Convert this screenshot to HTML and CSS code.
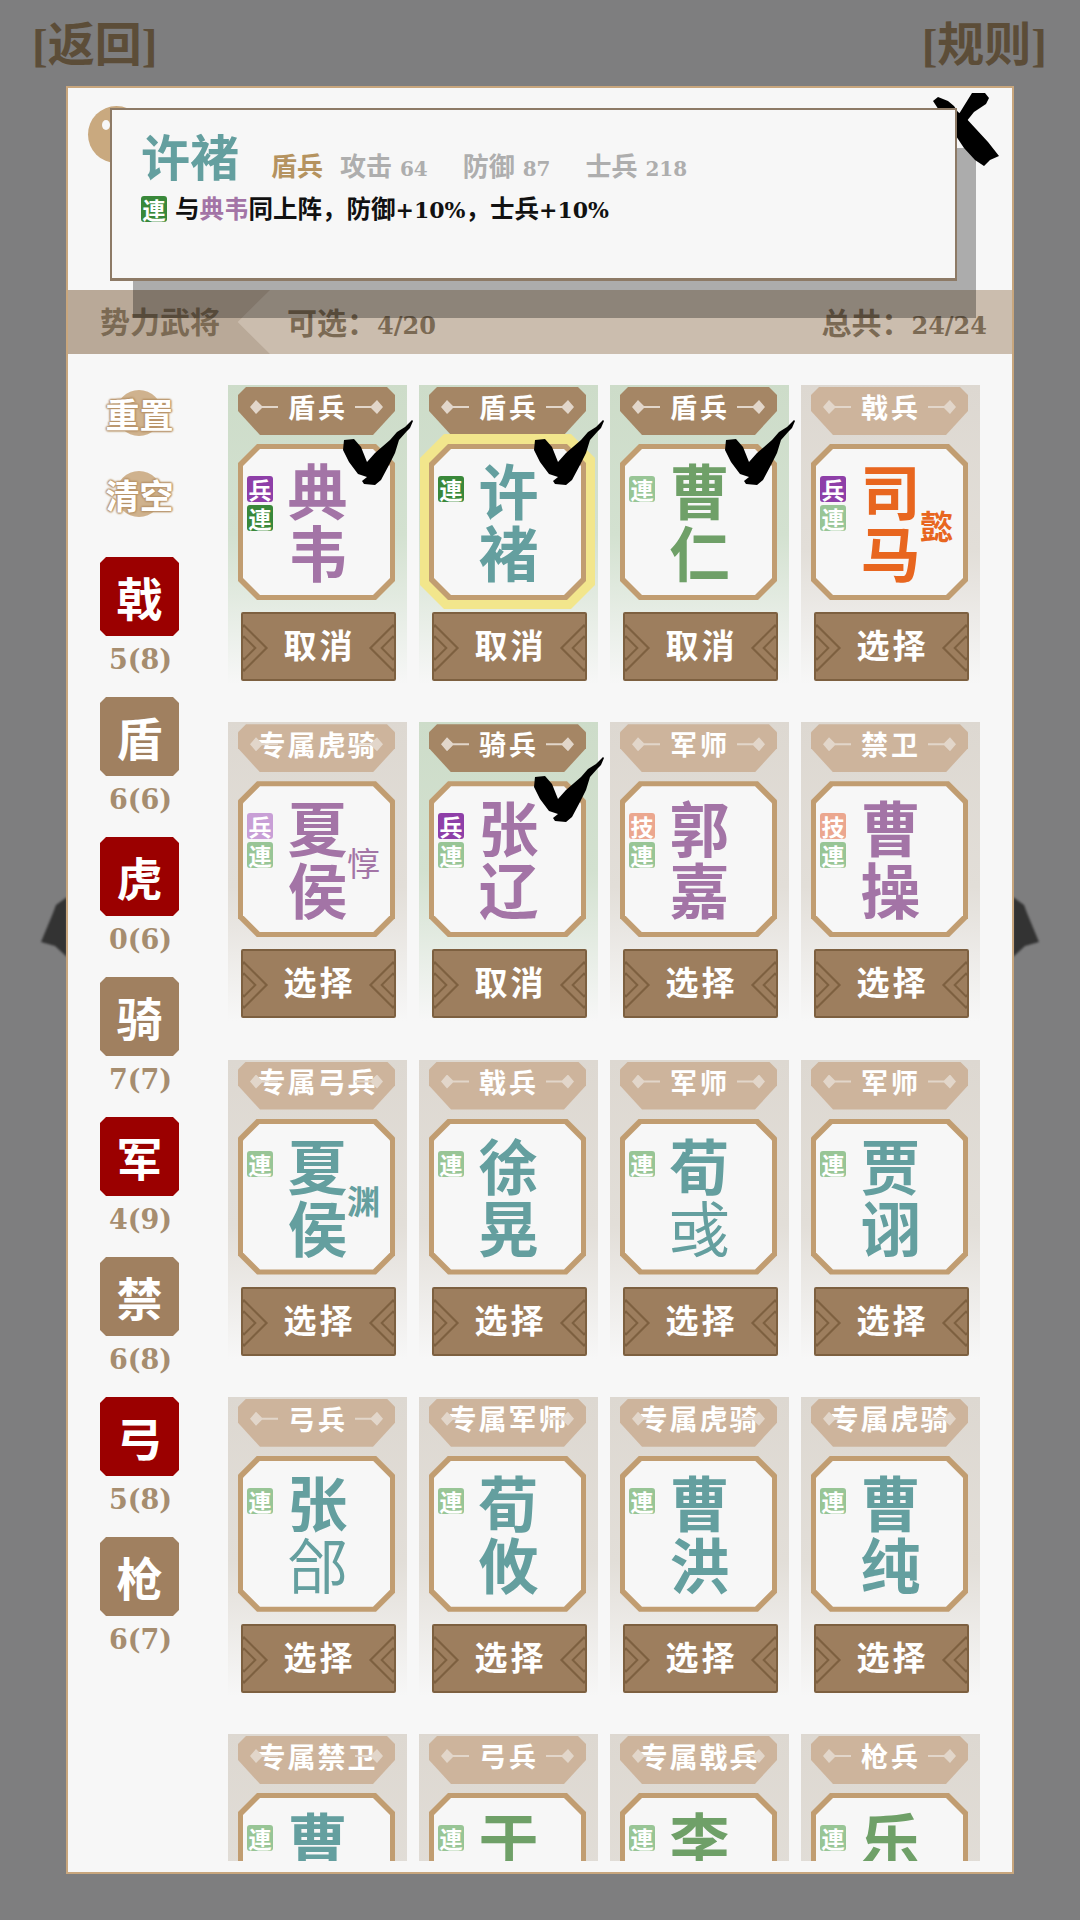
FILE: index.html
```html
<!DOCTYPE html>
<html lang="zh-CN">
<head>
    <meta charset="UTF-8">
    <title>势力武将</title>
    <link rel="stylesheet" href="styles.css">
</head>
<body>
    <svg class="brush-side brush-left" viewBox="0 0 26 60"><path d="M26 0 L15 8 L12 16 L0 45 L14 49 L26 60 Z"/></svg>
    <svg class="brush-side brush-right" viewBox="0 0 26 60"><path d="M26 0 L15 8 L12 16 L0 45 L14 49 L26 60 Z"/></svg>

    <header class="top-nav">
        <a class="nav-link"><i>[</i>返回<i>]</i></a>
        <a class="nav-link"><i>[</i>规则<i>]</i></a>
    </header>

    <div class="panel">
        <!-- Panel head, mostly under the tooltip -->
        <div class="panel-head">
            <span class="head-icon"></span>
            <span class="head-title">魏武帝</span>
        </div>

        <div class="bar">
            <div class="bar-title">势力武将</div>
            <div class="bar-pick">可选：<span class="num">4/20</span></div>
            <div class="bar-total">总共：<span class="num">24/24</span></div>
        </div>

        <div class="main">
            <aside class="side">
                <div class="reset">重置</div>
                <div class="reset reset-last">清空</div>
                <div class="side-item"><div class="side-tab red">戟</div><div class="side-count">5(8)</div></div>
                <div class="side-item"><div class="side-tab">盾</div><div class="side-count">6(6)</div></div>
                <div class="side-item"><div class="side-tab red">虎</div><div class="side-count">0(6)</div></div>
                <div class="side-item"><div class="side-tab">骑</div><div class="side-count">7(7)</div></div>
                <div class="side-item"><div class="side-tab red">军</div><div class="side-count">4(9)</div></div>
                <div class="side-item"><div class="side-tab">禁</div><div class="side-count">6(8)</div></div>
                <div class="side-item"><div class="side-tab red">弓</div><div class="side-count">5(8)</div></div>
                <div class="side-item"><div class="side-tab">枪</div><div class="side-count">6(7)</div></div>
            </aside>

            <section class="grid">
                <!-- Row 1 -->
                <div class="card picked">
                    <div class="tag">盾兵</div>
                    <div class="portrait"><div class="frame"><div class="frame-in">
                        <div class="badges"><span class="badge bing">兵</span><span class="badge lian">連</span></div>
                        <div class="name purple">典韦</div>
                    </div></div></div>
                    <div class="btn">取消</div>
                    <svg class="check"><use href="#check"/></svg>
                </div>
                <div class="card picked glow">
                    <div class="tag">盾兵</div>
                    <div class="portrait"><div class="frame"><div class="frame-in">
                        <div class="badges"><span class="badge lian">連</span></div>
                        <div class="name teal">许褚</div>
                    </div></div></div>
                    <div class="btn">取消</div>
                    <svg class="check"><use href="#check"/></svg>
                </div>
                <div class="card picked">
                    <div class="tag">盾兵</div>
                    <div class="portrait"><div class="frame"><div class="frame-in">
                        <div class="badges"><span class="badge lian off">連</span></div>
                        <div class="name green">曹仁</div>
                    </div></div></div>
                    <div class="btn">取消</div>
                    <svg class="check"><use href="#check"/></svg>
                </div>
                <div class="card">
                    <div class="tag">戟兵</div>
                    <div class="portrait"><div class="frame"><div class="frame-in">
                        <div class="badges"><span class="badge bing">兵</span><span class="badge lian off">連</span></div>
                        <div class="name orange">司马<span class="given">懿</span></div>
                    </div></div></div>
                    <div class="btn">选择</div>
                </div>

                <!-- Row 2 -->
                <div class="card">
                    <div class="tag long">专属虎骑</div>
                    <div class="portrait"><div class="frame"><div class="frame-in">
                        <div class="badges"><span class="badge bing off">兵</span><span class="badge lian off">連</span></div>
                        <div class="name purple">夏侯<span class="given thin">惇</span></div>
                    </div></div></div>
                    <div class="btn">选择</div>
                </div>
                <div class="card picked">
                    <div class="tag">骑兵</div>
                    <div class="portrait"><div class="frame"><div class="frame-in">
                        <div class="badges"><span class="badge bing">兵</span><span class="badge lian off">連</span></div>
                        <div class="name purple">张辽</div>
                    </div></div></div>
                    <div class="btn">取消</div>
                    <svg class="check"><use href="#check"/></svg>
                </div>
                <div class="card">
                    <div class="tag">军师</div>
                    <div class="portrait"><div class="frame"><div class="frame-in">
                        <div class="badges"><span class="badge ji">技</span><span class="badge lian off">連</span></div>
                        <div class="name purple">郭嘉</div>
                    </div></div></div>
                    <div class="btn">选择</div>
                </div>
                <div class="card">
                    <div class="tag">禁卫</div>
                    <div class="portrait"><div class="frame"><div class="frame-in">
                        <div class="badges"><span class="badge ji">技</span><span class="badge lian off">連</span></div>
                        <div class="name purple">曹操</div>
                    </div></div></div>
                    <div class="btn">选择</div>
                </div>

                <!-- Row 3 -->
                <div class="card">
                    <div class="tag long">专属弓兵</div>
                    <div class="portrait"><div class="frame"><div class="frame-in">
                        <div class="badges"><span class="badge lian off">連</span></div>
                        <div class="name teal">夏侯<span class="given">渊</span></div>
                    </div></div></div>
                    <div class="btn">选择</div>
                </div>
                <div class="card">
                    <div class="tag">戟兵</div>
                    <div class="portrait"><div class="frame"><div class="frame-in">
                        <div class="badges"><span class="badge lian off">連</span></div>
                        <div class="name teal">徐晃</div>
                    </div></div></div>
                    <div class="btn">选择</div>
                </div>
                <div class="card">
                    <div class="tag">军师</div>
                    <div class="portrait"><div class="frame"><div class="frame-in">
                        <div class="badges"><span class="badge lian off">連</span></div>
                        <div class="name teal">荀<span class="light">彧</span></div>
                    </div></div></div>
                    <div class="btn">选择</div>
                </div>
                <div class="card">
                    <div class="tag">军师</div>
                    <div class="portrait"><div class="frame"><div class="frame-in">
                        <div class="badges"><span class="badge lian off">連</span></div>
                        <div class="name teal">贾诩</div>
                    </div></div></div>
                    <div class="btn">选择</div>
                </div>

                <!-- Row 4 -->
                <div class="card">
                    <div class="tag">弓兵</div>
                    <div class="portrait"><div class="frame"><div class="frame-in">
                        <div class="badges"><span class="badge lian off">連</span></div>
                        <div class="name teal">张<span class="light">郃</span></div>
                    </div></div></div>
                    <div class="btn">选择</div>
                </div>
                <div class="card">
                    <div class="tag long">专属军师</div>
                    <div class="portrait"><div class="frame"><div class="frame-in">
                        <div class="badges"><span class="badge lian off">連</span></div>
                        <div class="name teal">荀攸</div>
                    </div></div></div>
                    <div class="btn">选择</div>
                </div>
                <div class="card">
                    <div class="tag long">专属虎骑</div>
                    <div class="portrait"><div class="frame"><div class="frame-in">
                        <div class="badges"><span class="badge lian off">連</span></div>
                        <div class="name teal">曹洪</div>
                    </div></div></div>
                    <div class="btn">选择</div>
                </div>
                <div class="card">
                    <div class="tag long">专属虎骑</div>
                    <div class="portrait"><div class="frame"><div class="frame-in">
                        <div class="badges"><span class="badge lian off">連</span></div>
                        <div class="name teal">曹纯</div>
                    </div></div></div>
                    <div class="btn">选择</div>
                </div>

                <!-- Row 5, cut off by the scroll area -->
                <div class="card">
                    <div class="tag long">专属禁卫</div>
                    <div class="portrait"><div class="frame"><div class="frame-in">
                        <div class="badges"><span class="badge lian off">連</span></div>
                        <div class="name teal">曹休</div>
                    </div></div></div>
                    <div class="btn">选择</div>
                </div>
                <div class="card">
                    <div class="tag">弓兵</div>
                    <div class="portrait"><div class="frame"><div class="frame-in">
                        <div class="badges"><span class="badge lian off">連</span></div>
                        <div class="name green">于禁</div>
                    </div></div></div>
                    <div class="btn">选择</div>
                </div>
                <div class="card">
                    <div class="tag long">专属戟兵</div>
                    <div class="portrait"><div class="frame"><div class="frame-in">
                        <div class="badges"><span class="badge lian off">連</span></div>
                        <div class="name green">李典</div>
                    </div></div></div>
                    <div class="btn">选择</div>
                </div>
                <div class="card">
                    <div class="tag">枪兵</div>
                    <div class="portrait"><div class="frame"><div class="frame-in">
                        <div class="badges"><span class="badge lian off">連</span></div>
                        <div class="name green">乐进</div>
                    </div></div></div>
                    <div class="btn">选择</div>
                </div>
            </section>
        </div>

        <!-- Close mark, tooltip shadow and tooltip lie over the panel -->
        <svg class="close-mark" viewBox="0 0 72 76">
            <path d="M42 1 L55 1 L59 6 L56 12 L44 20 L36 30 L28 38 L24 30 Z"/>
            <path d="M3 9 L8 5 L18 9 L24 14 L28 20 L34 24 L46 37 L58 50 L69 64 L60 68 L54 74 L45 68 L34 56 L26 44 Z"/>
        </svg>
        <div class="tip-shadow"></div>
        <div class="tip">
            <div class="tip-head">
                <span class="tip-name">许褚</span>
                <span class="tip-kind">盾兵</span>
                <span class="tip-stat tip-atk">攻击 <b>64</b></span>
                <span class="tip-stat">防御 <b>87</b></span>
                <span class="tip-stat">士兵 <b>218</b></span>
            </div>
            <div class="tip-skill">
                <span class="badge lian">連</span>
                <span class="tip-line">与<span class="hl">典韦</span>同上阵，防御<span class="num">+10%</span>，士兵<span class="num">+10%</span></span>
            </div>
        </div>
    </div>

    <svg class="defs">
        <symbol id="check" viewBox="0 0 71 66">
            <path d="M1 20 L11 19 L18 27 L24 42 L32 33 L47 20 L54 12 L62 7 L69 0 L70 1 L67 8 L64 11 L56 20 L52 33 L46 45 L38 60 L32 65 L21 64 L19 61 L24 57 L15 54 L6 42 L0 30 Z"/>
        </symbol>
    </svg>
</body>
</html>
```
FILE: styles.css
```css
* {
    margin: 0;
    padding: 0;
    box-sizing: border-box;
}

body {
    position: relative;
    width: 1080px;
    height: 1920px;
    overflow: hidden;
    background: #7e7e7f;
    font-family: "DejaVu Serif", "Noto Sans CJK SC", serif;
    font-weight: 700;
    color: #fff;
}

.defs {
    position: absolute;
    width: 0;
    height: 0;
}

.brush-side {
    position: absolute;
    top: 897px;
    left: 41px;
    width: 26px;
    height: 60px;
    fill: #333;
    filter: blur(1px);
}

.brush-right {
    left: 1013px;
    transform: scaleX(-1);
}

.top-nav {
    display: flex;
    justify-content: space-between;
    height: 86px;
    padding: 10px 33px 0 32px;
}

.nav-link {
    font-family: "Noto Sans CJK SC", sans-serif;
    font-size: 47px;
    line-height: 62px;
    color: #5c4d38;
}

.nav-link i {
    font-family: "Liberation Serif", serif;
    font-style: normal;
}

/* Panel */
.panel {
    position: relative;
    display: flex;
    flex-direction: column;
    width: 948px;
    height: 1788px;
    margin-left: 66px;
    padding-bottom: 11px;
    background: #f7f7f7;
    border: 2px solid #c8a67d;
}

.panel-head {
    display: flex;
    height: 202px;
    padding: 18px 0 0 20px;
}

.head-icon {
    position: relative;
    width: 57px;
    height: 57px;
    border-radius: 50%;
    background: #c9a97f;
}

.head-icon::after {
    content: "";
    position: absolute;
    left: 14px;
    top: 14px;
    width: 8px;
    height: 10px;
    border-radius: 50%;
    background: #f7f7f7;
}

.head-title {
    margin-left: 25px;
    font-family: "Noto Sans CJK SC", sans-serif;
    font-size: 26px;
    line-height: 30px;
    color: #a34a45;
}

.bar {
    display: flex;
    align-items: center;
    height: 64px;
    padding-bottom: 3px;
    background: #cbbdae;
    font-family: "Noto Sans CJK SC", sans-serif;
    font-size: 30px;
    color: #7b6a54;
}

.bar .num {
    font-family: "DejaVu Serif", serif;
    font-size: 24px;
}

.bar-title {
    align-self: flex-start;
    width: 202px;
    height: 64px;
    padding-left: 32px;
    line-height: 60px;
    background: #b9a998;
    clip-path: polygon(0 0, 100% 0, 84% 50%, 100% 100%, 0 100%);
}

.bar-pick {
    margin-left: 17px;
}

.bar-total {
    margin-left: auto;
    padding-right: 25px;
}

.main {
    display: flex;
    flex: 1;
    min-height: 0;
    overflow: hidden;
}

/* Left column */
.side {
    width: 160px;
    flex-shrink: 0;
    padding: 36px 0 0 32px;
}

.reset {
    position: relative;
    isolation: isolate;
    display: flex;
    justify-content: center;
    align-items: center;
    width: 79px;
    height: 46px;
    margin-bottom: 35px;
    font-family: "Noto Sans CJK SC", sans-serif;
    font-size: 34px;
    white-space: nowrap;
    text-shadow: 0 0 2px #b8946a, 0 1px 2px #b8946a, 1px 0 2px #b8946a, -1px 0 2px #b8946a, 0 -1px 2px #b8946a;
}

.reset::before {
    content: "";
    position: absolute;
    left: 16px;
    top: 0;
    z-index: -1;
    width: 46px;
    height: 46px;
    border-radius: 50%;
    background: #cfb28e;
}

.reset-last {
    margin-bottom: 40px;
}

.side-item {
    height: 140px;
}

.side-tab {
    display: flex;
    justify-content: center;
    align-items: center;
    width: 79px;
    height: 79px;
    padding-bottom: 2px;
    background: #a08060;
    font-family: "Noto Sans CJK SC", sans-serif;
    font-size: 46px;
    clip-path: polygon(6px 0, calc(100% - 6px) 0, 100% 6px, 100% calc(100% - 6px), calc(100% - 6px) 100%, 6px 100%, 0 calc(100% - 6px), 0 6px);
}

.side-tab.red {
    background: #9b0000;
}

.side-count {
    width: 81px;
    margin-top: 9px;
    font-size: 27px;
    line-height: 30px;
    text-align: center;
    color: #a68d6f;
}

/* Card grid */
.grid {
    display: grid;
    grid-template-columns: repeat(4, 179px);
    grid-auto-rows: 299px;
    column-gap: 12px;
    row-gap: 38.25px;
    padding-top: 31px;
}

.card {
    position: relative;
    padding: 2px 10px 0;
    background: linear-gradient(#ddd8d1 0%, #e2ded8 55%, #f7f7f7 100%);
    font-family: "Noto Sans CJK SC", sans-serif;
}

.card.picked {
    background: linear-gradient(#cddcc9 0%, #d3e1d0 50%, #f7f7f7 100%);
}

.tag {
    position: relative;
    display: flex;
    justify-content: center;
    align-items: center;
    width: 157px;
    height: 48px;
    padding-bottom: 9px;
    background: #cdb49c;
    font-size: 27px;
    letter-spacing: 3px;
    text-indent: 3px;
    clip-path: polygon(8px 0, calc(100% - 8px) 0, 100% 8px, 100% 24px, calc(100% - 22px) 100%, 22px 100%, 0 24px, 0 8px);
}

.picked .tag {
    background: #a58665;
}

.tag.long {
    font-size: 28px;
    letter-spacing: 2px;
    text-indent: 2px;
}

.tag::before,
.tag::after {
    content: "";
    position: absolute;
    top: 13px;
    left: 12px;
    width: 28px;
    height: 14px;
    background: #e2d6ca;
    clip-path: polygon(0 50%, 6px 0, 12px calc(50% - 1px), 100% calc(50% - 1px), 100% calc(50% + 1px), 12px calc(50% + 1px), 6px 100%);
}

.tag::after {
    left: auto;
    right: 12px;
    transform: scaleX(-1);
}

.portrait {
    position: relative;
    width: 157px;
    height: 156px;
    margin-top: 9px;
}

.glow .portrait::before {
    content: "";
    position: absolute;
    inset: -10px -9px -9px;
    background: #f2e68c;
    clip-path: polygon(24px 0, calc(100% - 24px) 0, 100% 24px, 100% calc(100% - 24px), calc(100% - 24px) 100%, 24px 100%, 0 calc(100% - 24px), 0 24px);
}

.frame {
    position: relative;
    height: 100%;
    padding: 5px;
    background: #c19d71;
    clip-path: polygon(19px 0, calc(100% - 19px) 0, 100% 19px, 100% calc(100% - 19px), calc(100% - 19px) 100%, 19px 100%, 0 calc(100% - 19px), 0 19px);
}

.frame-in {
    position: relative;
    display: flex;
    justify-content: center;
    align-items: center;
    height: 100%;
    padding: 0 0 4px 2px;
    background: #f7f7f7;
    clip-path: polygon(17px 0, calc(100% - 17px) 0, 100% 17px, 100% calc(100% - 17px), calc(100% - 17px) 100%, 17px 100%, 0 calc(100% - 17px), 0 17px);
}

.badges {
    position: absolute;
    left: 4px;
    top: 27px;
    display: flex;
    flex-direction: column;
    gap: 3px;
}

.badge {
    display: flex;
    justify-content: center;
    align-items: center;
    width: 26px;
    height: 26px;
    border-radius: 3px;
    font-family: "Noto Sans CJK SC", sans-serif;
    font-size: 23px;
    line-height: 26px;
    color: #fff;
}

.badge.bing {
    background: #8e3fa8;
}

.badge.bing.off {
    background: #c89fd6;
}

.badge.ji {
    background: #eba78f;
}

.badge.lian {
    background: #39883a;
}

.badge.lian.off {
    background: #98c596;
}

.name {
    width: 60px;
    font-size: 60px;
    line-height: 62px;
    text-align: center;
}

.purple { color: #a374a6; }
.teal { color: #649f9f; }
.green { color: #6fa068; }
.orange { color: #e8661f; }

.light {
    font-weight: 400;
}

.given {
    position: absolute;
    right: 10px;
    top: 58px;
    font-size: 33px;
    line-height: 36px;
}

.given.thin {
    font-weight: 400;
}

.btn {
    position: relative;
    width: 155px;
    height: 69px;
    margin: 12px 0 0 2.5px;
    overflow: hidden;
    background: #9d7e5e;
    border: 2px solid #7d6040;
    border-radius: 2px;
    font-size: 33px;
    line-height: 60px;
    letter-spacing: 3px;
    text-indent: 3px;
    text-align: center;
}

.btn::before,
.btn::after {
    content: "";
    position: absolute;
    top: 17px;
    left: -16px;
    width: 30px;
    height: 30px;
    border: 2px solid #7d6040;
    box-shadow: inset 0 0 0 6px #9d7e5e, inset 0 0 0 8px #7d6040;
    transform: rotate(45deg);
}

.btn::after {
    left: auto;
    right: -16px;
}

.check {
    position: absolute;
    left: 115px;
    top: 35px;
    width: 71px;
    height: 66px;
    fill: #000;
}

/* Tooltip over the panel */
.close-mark {
    position: absolute;
    left: 862px;
    top: 4px;
    width: 72px;
    height: 76px;
    fill: #000;
}

.tip-shadow {
    position: absolute;
    left: 65px;
    top: 60px;
    width: 843px;
    height: 170px;
    background: rgba(0, 0, 0, 0.3);
}

.tip {
    position: absolute;
    left: 42px;
    top: 20px;
    width: 847px;
    height: 173px;
    padding: 14px 29px 0;
    background: #f7f7f7;
    border: 2px solid #8d7a66;
    border-bottom-width: 3px;
    font-family: "Noto Sans CJK SC", sans-serif;
}

.tip-head {
    display: flex;
    align-items: baseline;
    height: 64px;
}

.tip-name {
    font-size: 49px;
    line-height: 62px;
    color: #649f9f;
}

.tip-kind {
    margin-left: 32px;
    font-size: 26px;
    color: #b5935f;
}

.tip-stat {
    margin-left: 35px;
    font-size: 26px;
    color: #aeaeae;
}

.tip-atk {
    margin-left: 17px;
}

.tip-stat b {
    margin-left: 2px;
    font-family: "DejaVu Serif", serif;
    font-size: 20px;
}

.tip-skill {
    display: flex;
    align-items: center;
    gap: 8px;
    margin-top: 5px;
}

.tip-line {
    font-size: 24.5px;
    line-height: 30px;
    color: #111;
}

.tip-line .num {
    font-family: "DejaVu Serif", serif;
    font-size: 22px;
}

.hl {
    color: #a374a6;
}
```
